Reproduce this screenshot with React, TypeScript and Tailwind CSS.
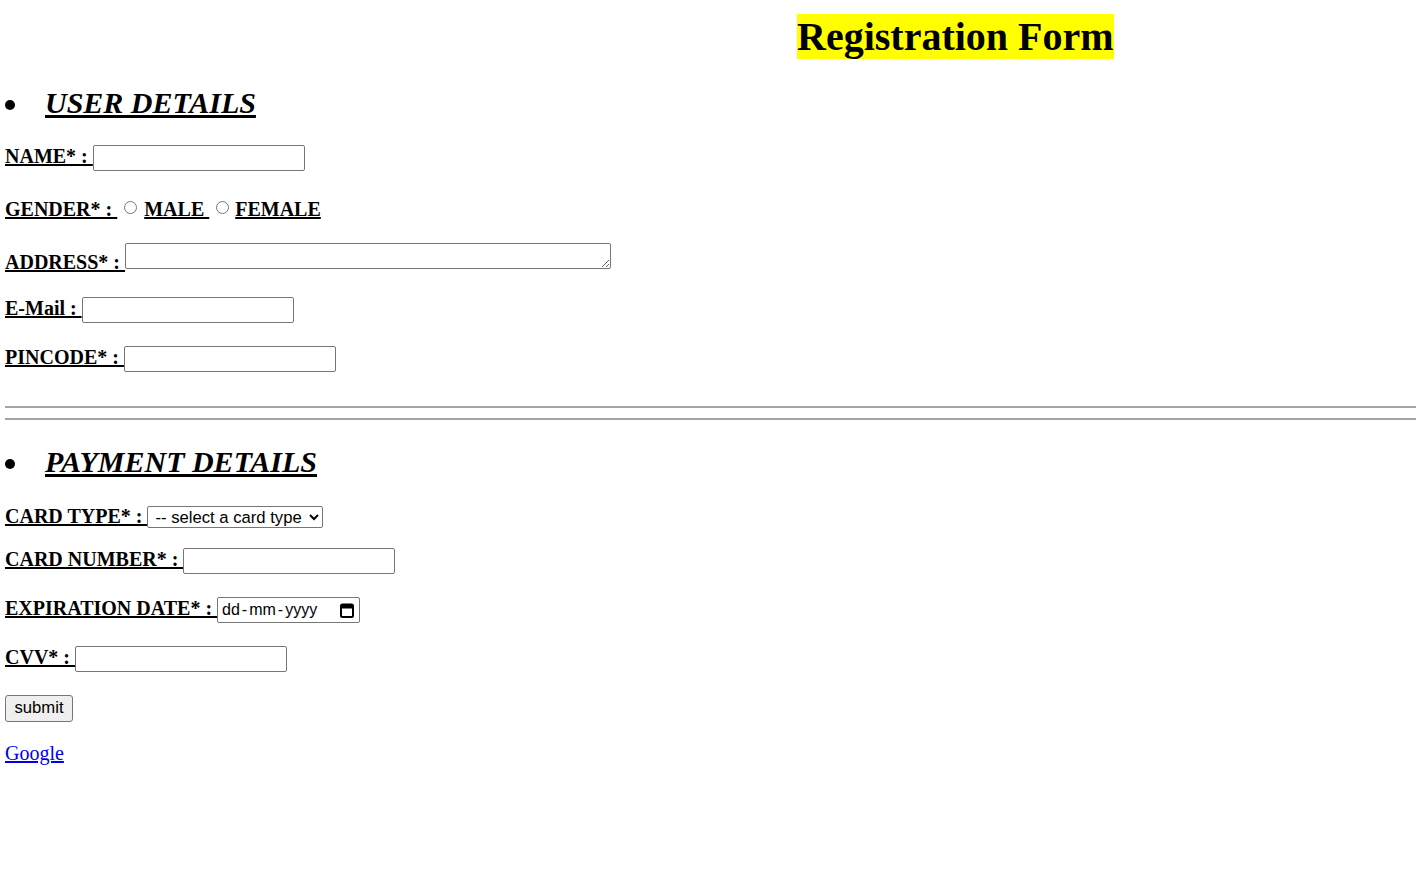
import React from "react";

const inputCls =
  "w-[212px] h-[26px] border border-[#767676] rounded-[2px] bg-white px-[2px] text-[16.67px] font-['Liberation_Sans',sans-serif] outline-none";

function Label({ children }: { children: React.ReactNode }) {
  return (
    <label className="font-bold underline text-[20px] leading-[23px] whitespace-pre">
      {children}
    </label>
  );
}

function Bullet({ children }: { children: React.ReactNode }) {
  return (
    <div className="flex items-start h-[35px]">
      <span className="mt-[15px] w-[10px] h-[10px] rounded-full bg-black shrink-0" />
      <h2 className="ml-[30px] text-[30px] leading-[35px] font-bold italic underline">
        {children}
      </h2>
    </div>
  );
}

function CalendarIcon() {
  return (
    <svg width="14" height="15" viewBox="0 0 14 15" className="block">
      <rect x="1" y="1.5" width="12" height="12.5" rx="1.5" fill="none" stroke="#000" strokeWidth="2" />
      <rect x="1" y="1.5" width="12" height="4" fill="#000" />
    </svg>
  );
}

export default function App() {
  return (
    <div className="min-h-screen bg-white text-black pl-[5px] font-['Liberation_Serif',serif]">
      <div className="pt-[14px] pl-[792px]">
        <span className="inline-block h-[45px] leading-[45px] bg-[#ffff00] text-[40px] font-bold whitespace-nowrap">
          Registration Form
        </span>
      </div>

      <div className="mt-[26px]">
        <Bullet>USER DETAILS</Bullet>
      </div>

      <div className="mt-[25px] flex items-baseline">
        <Label>NAME* : </Label>
        <input type="text" className={inputCls} />
      </div>

      <div className="mt-[27px] flex items-end h-[23px]">
        <Label>GENDER* : </Label>
        <input type="radio" name="g" className="m-0 ml-[7px] mr-[7px] mb-[7px] w-[13px] h-[13px]" />
        <Label>MALE </Label>
        <input type="radio" name="g" className="m-0 ml-[7px] mr-[6px] mb-[7px] w-[13px] h-[13px]" />
        <Label>FEMALE</Label>
      </div>

      <div className="mt-[22px] flex items-end">
        <label className="font-bold underline text-[20px] leading-[14px] whitespace-pre">ADDRESS* : </label>
        <textarea className="w-[486px] h-[26px] border border-[#767676] rounded-[2px] bg-white resize-both block text-[13.33px] outline-none" />
      </div>

      <div className="mt-[28px] flex items-baseline">
        <Label>E-Mail : </Label>
        <input type="email" className={inputCls} />
      </div>

      <div className="mt-[23px] flex items-baseline">
        <Label>PINCODE* : </Label>
        <input type="text" className={inputCls} />
      </div>

      <div className="mt-[34px] h-[2px] bg-[#a3a3a3]" />
      <div className="mt-[10px] h-[2px] bg-[#a3a3a3]" />

      <div className="mt-[24px]">
        <Bullet>PAYMENT DETAILS</Bullet>
      </div>

      <div className="mt-[26px] flex items-baseline">
        <Label>CARD TYPE* : </Label>
        <select className="w-[176px] h-[22px] border border-[#767676] rounded-[2px] bg-white text-[16.67px] font-['Liberation_Sans',sans-serif] pl-[3px] outline-none">
          <option>-- select a card type</option>
          <option>VISA</option>
          <option>MasterCard</option>
          <option>RuPay</option>
        </select>
      </div>

      <div className="mt-[20px] flex items-baseline">
        <Label>CARD NUMBER* : </Label>
        <input type="text" className={inputCls} />
      </div>

      <div className="mt-[23px] flex items-baseline">
        <Label>EXPIRATION DATE* : </Label>
        <div className="w-[143px] h-[26px] border border-[#767676] rounded-[2px] bg-white flex items-center pl-[4px] pr-[5px] text-[16px] font-['Liberation_Sans',sans-serif]">
          <span className="flex-1 flex gap-[2px]">
            <span>dd</span>
            <span>-</span>
            <span>mm</span>
            <span>-</span>
            <span>yyyy</span>
          </span>
          <CalendarIcon />
        </div>
      </div>

      <div className="mt-[23px] flex items-baseline">
        <Label>CVV* : </Label>
        <input type="text" className={inputCls} />
      </div>

      <div className="mt-[23px]">
        <button className="w-[68px] h-[27px] border border-[#767676] rounded-[3px] bg-[#efefef] text-[16.67px] font-['Liberation_Sans',sans-serif] leading-none">
          submit
        </button>
      </div>

      <div className="mt-[20px]">
        <a href="#" className="text-[20px] leading-[23px] text-[#0000ee] underline">
          Google
        </a>
      </div>
    </div>
  );
}
